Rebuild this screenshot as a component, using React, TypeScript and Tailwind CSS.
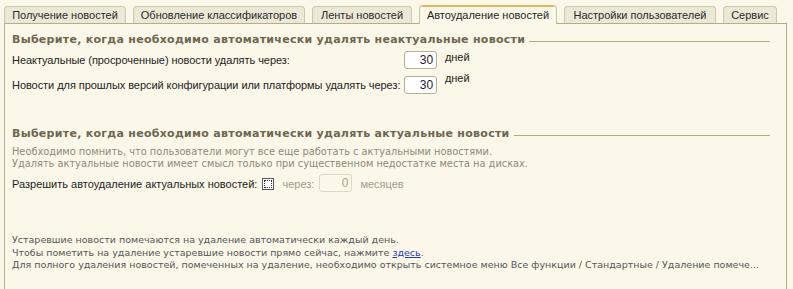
import React from "react";

const tabs = [
  { label: "Получение новостей", w: "w-[122px]" },
  { label: "Обновление классификаторов", w: "w-[172px]" },
  { label: "Ленты новостей", w: "w-[100px]" },
  { label: "Автоудаление новостей", w: "w-[138px]", active: true },
  { label: "Настройки пользователей", w: "w-[152px]" },
  { label: "Сервис", w: "w-[54px]" },
];

function Heading({ children }: { children: React.ReactNode }) {
  return (
    <div className="flex items-center mr-[16px] h-[16px]">
      <span className="font-['DejaVu_Sans',sans-serif] font-bold text-[11px] leading-[16px] text-[#6f6650] whitespace-nowrap tracking-[0.28px]">
        {children}
      </span>
      <div className="flex-1 h-px bg-[#b3aa86] ml-[4px] mt-[3px]" />
    </div>
  );
}

function NumBox({ value, disabled }: { value: string; disabled?: boolean }) {
  return (
    <div
      className={
        disabled
          ? "w-[33px] h-[18px] border border-[#ddd8c2] rounded-[3px] bg-[#fbf8e9] text-right pr-[3px] text-[12px] leading-[16px] text-[#a8a594]"
          : "w-[33px] h-[18px] border border-[#b9b292] rounded-[3px] bg-white text-right pr-[3px] text-[12px] leading-[16px] text-[#1c1c3a]"
      }
    >
      {value}
    </div>
  );
}

export default function App() {
  return (
    <div className="w-[793px] h-[289px] bg-[#fbf8e9] overflow-hidden font-['Liberation_Sans',Arial,sans-serif] text-[11px] text-[#222]">
      {/* tabs */}
      <div className="flex items-end gap-[7px] pl-[4px] h-[24px] relative z-10">
        {tabs.map((t) =>
          t.active ? (
            <div
              key={t.label}
              className={`${t.w} h-[19px] border border-b-0 border-[#c9c2a2] rounded-t-[4px] bg-[#fbf8e9] relative flex items-center justify-center text-[#1f1f1f] leading-none pt-[1px] whitespace-nowrap`}
            >
              <div className="absolute -top-px left-[2px] right-[2px] h-[2px] bg-[#e9b55a] rounded-t-[3px]" />
              {t.label}
            </div>
          ) : (
            <div
              key={t.label}
              className={`${t.w} h-[17px] mb-[1px] border border-b-0 border-[#cdc8ad] rounded-t-[4px] bg-[#ebe8d6] flex items-center justify-center text-[#2a2a2a] leading-none pt-[1px] whitespace-nowrap`}
            >
              {t.label}
            </div>
          )
        )}
      </div>
      {/* panel */}
      <div className="ml-[4px] w-[783px] h-[300px] -mt-px border border-[#b5ad8c] pl-[7px]">
        <div className="pt-[8px]">
          <Heading>Выберите, когда необходимо автоматически удалять неактуальные новости</Heading>
        </div>
        <div className="grid grid-cols-[392px_33px_auto] gap-y-[7px] mt-[3px] items-start tracking-[-0.06px]">
          <div className="h-[18px] leading-[18px] whitespace-nowrap">Неактуальные (просроченные) новости удалять через:</div>
          <NumBox value="30" />
          <div className="pl-[8px] leading-[11px] mt-[1px]">дней</div>
          <div className="h-[18px] leading-[18px] whitespace-nowrap">Новости для прошлых версий конфигурации или платформы удалять через:</div>
          <NumBox value="30" />
          <div className="pl-[8px] leading-[11px] -mt-[3px]">дней</div>
        </div>

        <div className="mt-[32px]">
          <Heading>Выберите, когда необходимо автоматически удалять актуальные новости</Heading>
        </div>
        <div className="mt-[4px] font-['DejaVu_Sans',sans-serif] text-[9.8px] leading-[12px] text-[#8e8a78] whitespace-nowrap">
          <div>Необходимо помнить, что пользователи могут все еще работать с актуальными новостями.</div>
          <div>Удалять актуальные новости имеет смысл только при существенном недостатке места на дисках.</div>
        </div>
        <div className="flex items-center mt-[4px] h-[18px]">
          <span className="whitespace-nowrap mt-[3px]">Разрешить автоудаление актуальных новостей:</span>
          <div className="ml-[5px] w-[12px] h-[12px] border border-[#5a5a5a] bg-white p-[1px] mt-[2px]">
            <div className="w-full h-full border border-dotted border-[#333]" />
          </div>
          <span className="ml-[8px] text-[#a19d8b] mt-[3px]">через:</span>
          <div className="ml-[5px]">
            <NumBox value="0" disabled />
          </div>
          <span className="ml-[8px] text-[#a19d8b] mt-[3px]">месяцев</span>
        </div>

        <div className="mt-[42px] font-['DejaVu_Sans',sans-serif] text-[9.5px] leading-[12.5px] text-[#555] whitespace-nowrap">
          <div>Устаревшие новости помечаются на удаление автоматически каждый день.</div>
          <div>
            Чтобы пометить на удаление устаревшие новости прямо сейчас, нажмите{" "}
            <span className="text-[#1a3cc0] underline">здесь</span>.
          </div>
          <div>Для полного удаления новостей, помеченных на удаление, необходимо открыть системное меню Все функции / Стандартные / Удаление помече...</div>
        </div>
      </div>
    </div>
  );
}
